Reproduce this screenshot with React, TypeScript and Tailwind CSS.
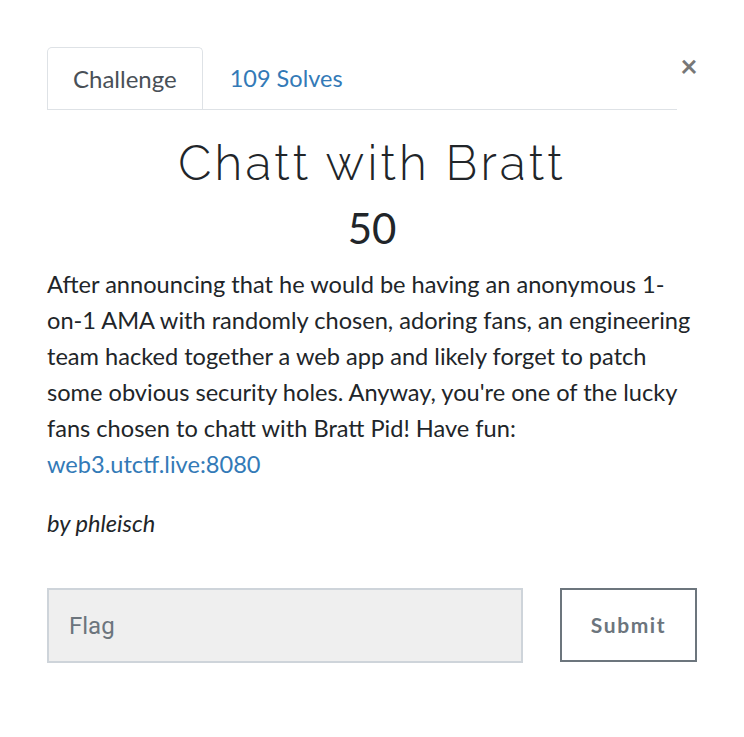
import React, { useState } from "react";

const App: React.FC = () => {
  const [flag, setFlag] = useState("");

  return (
    <div className="min-h-screen bg-white font-['Lato',sans-serif] text-[#212529]">
      <div className="w-[650px] ml-[47px] pt-[47px]">
        {/* tabs + close */}
        <div className="flex items-start">
          <div className="flex flex-1 border-b border-[#dee2e6] mr-[2px]">
            <div className="h-[62px] px-[25px] flex items-center border border-b-0 border-[#dee2e6] rounded-t-[5px] bg-white -mb-px text-[24px] text-[#495057]">
              Challenge
            </div>
            <div className="h-[62px] px-[27px] pt-[1px] flex items-center text-[23.5px] text-[#337ab7]">
              109 Solves
            </div>
          </div>
          <button className="w-[20px] mt-[3px] -mr-[2px] text-[#777] text-[30px] leading-[30px] font-bold">
            ×
          </button>
        </div>

        {/* title */}
        <div className="text-center">
          <h1 className="mt-[24px] text-[48px] leading-[58px] font-light tracking-[3.2px] font-['Raleway','Lato',sans-serif]">
            Chatt with Bratt
          </h1>
          <h2 className="text-[42px] leading-[50px] font-normal mt-[11px]">50</h2>
        </div>

        {/* description */}
        <div className="mt-[13px] text-[23.6px] leading-[36px]">
          <p>
            After announcing that he would be having an anonymous 1-on-1 AMA
            with randomly chosen, adoring fans, an engineering team hacked
            together a web app and likely forget to patch some obvious
            security holes. Anyway, you're one of the lucky fans chosen to
            chatt with Bratt Pid! Have fun:{" "}
            <a href="#" className="text-[#337ab7]">
              web3.utctf.live:8080
            </a>
          </p>
          <p className="mt-[23px] italic">by phleisch</p>
        </div>

        {/* flag form */}
        <div className="flex mt-[47px] gap-[37px]">
          <input
            value={flag}
            onChange={(e) => setFlag(e.target.value)}
            placeholder="Flag"
            className="w-[476px] h-[75px] bg-[#efefef] border-2 border-[#ced4da] px-[20px] text-[24px] font-['Roboto',sans-serif] text-[#495057] placeholder:text-[#6c757d] outline-none"
          />
          <button className="w-[137px] h-[74px] border-2 border-[#6c757d] text-[#6c757d] text-[21px] font-bold tracking-[1.6px]">
            Submit
          </button>
        </div>
      </div>
    </div>
  );
};

export default App;
